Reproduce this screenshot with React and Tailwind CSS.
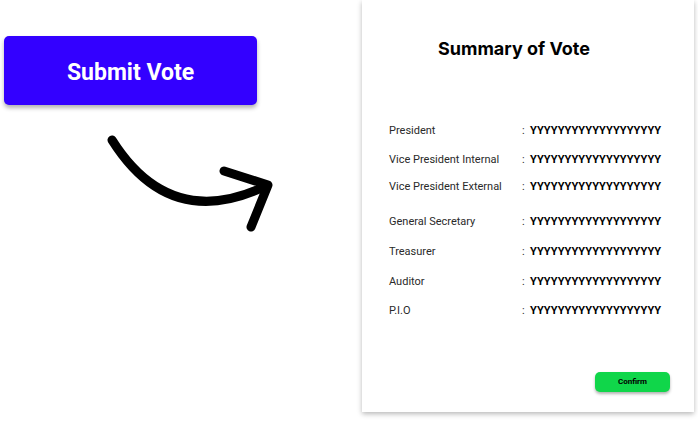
import React from "react";

const ROWS = [
    { label: "President", gap: "mt-[63px]" },
    { label: "Vice President Internal", gap: "mt-[13px]" },
    { label: "Vice President External", gap: "mt-[11px]" },
    { label: "General Secretary", gap: "mt-[19px]" },
    { label: "Treasurer", gap: "mt-[14px]" },
    { label: "Auditor", gap: "mt-[14px]" },
    { label: "P.I.O", gap: "mt-[13px]" },
];

const VALUE = "YYYYYYYYYYYYYYYYYYY";

function CurvedArrow() {
    return (
        <svg width="200" height="120" viewBox="90 120 200 120" className="mt-[15px] ml-[86px]">
            <path d="M112 140 Q 170 232 266 186" fill="none" stroke="black" strokeWidth="9" strokeLinecap="round" />
            <path d="M224 171 L 268 185 L 251 227" fill="none" stroke="black" strokeWidth="9" strokeLinecap="round" strokeLinejoin="round" />
        </svg>
    );
}

export default function App() {
    return (
        <div className="w-[698px] h-[421px] bg-white flex overflow-hidden" style={{ fontFamily: "Roboto, sans-serif" }}>
            <div className="w-[362px] flex-shrink-0 pt-[36px] pl-[4px]">
                <button className="w-[253px] h-[69px] pt-[6px] bg-[#3300ff] rounded-[5px] text-white text-[23px] font-bold shadow-[0_3px_4px_rgba(0,0,0,0.3)] flex items-center justify-center">Submit Vote</button>
                <CurvedArrow />
            </div>
            <div className="w-[332px] h-[412px] bg-white shadow-[0_2px_5px_rgba(0,0,0,0.28)] flex flex-col relative">
                <h1 className="pl-[76px] pt-[38px] text-[18px] font-bold text-black leading-[22px]" style={{ fontFamily: "Inter, sans-serif" }}>Summary of Vote</h1>
                <div className="pl-[27px] flex flex-col">
                    {ROWS.map((r, i) => (
                        <div key={i} className={`${r.gap} flex items-center text-[11px] leading-[16px] text-[#2a2a2a]`}>
                            <span className="w-[133px]">{r.label}</span>
                            <span className="w-[8px]">:</span>
                            <span className="font-bold text-black">{VALUE}</span>
                        </div>
                    ))}
                </div>
                <div className="flex-1" />
                <div className="flex justify-end pr-[24px] pb-[20px]">
                    <button className="w-[75px] h-[20px] bg-[#10d64a] rounded-[5px] text-[8px] font-bold text-black shadow-[0_2px_3px_rgba(0,0,0,0.3)]">Confirm</button>
                </div>
            </div>
        </div>
    );
}
